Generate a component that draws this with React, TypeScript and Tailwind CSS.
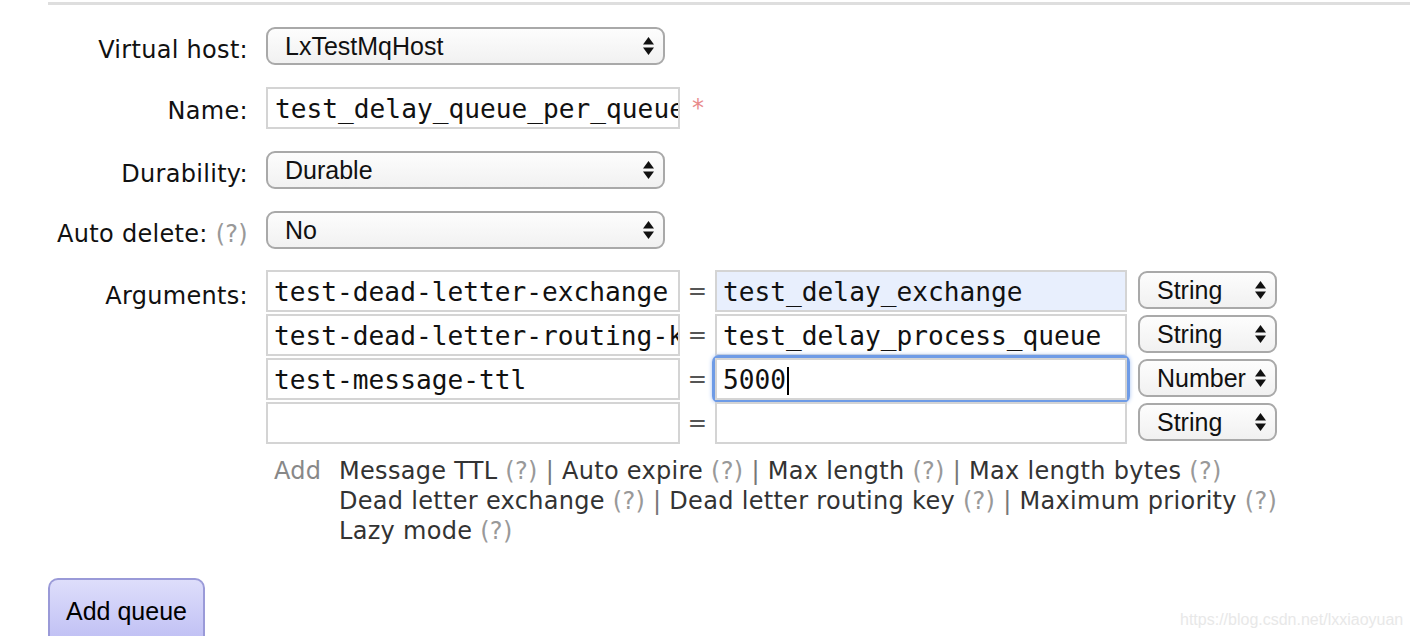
import React from 'react';

const labelFont = "font-['DejaVu_Sans',Verdana,sans-serif]";
const monoFont = "font-['DejaVu_Sans_Mono','Liberation_Mono',monospace]";
const uiFont = "font-['Liberation_Sans',Arial,sans-serif]";

function Arrows() {
  return (
    <svg width="11" height="18" viewBox="0 0 11 18" className="shrink-0">
      <path d="M5.5 0 L11 7.5 L0 7.5 Z" fill="#111" />
      <path d="M0 10.5 L11 10.5 L5.5 18 Z" fill="#111" />
    </svg>
  );
}

function FakeSelect({ value, width, pl = 'pl-[17px]' }: { value: string; width: string; pl?: string }) {
  return (
    <div
      className={`${width} ${pl} ${uiFont} flex h-[38px] items-center justify-between rounded-[9px] border-2 border-[#a9a9a9] bg-gradient-to-b from-[#fdfdfd] to-[#f1f1f1] pr-[9px] text-[25px] leading-none text-[#111]`}
    >
      <span>{value}</span>
      <Arrows />
    </div>
  );
}

function TextBox({ value, className = '', cursor = false }: { value: string; className?: string; cursor?: boolean }) {
  return (
    <div
      className={`${monoFont} flex h-[42px] w-full items-center overflow-hidden whitespace-nowrap border-2 border-[#d4d4d4] pl-[6px] pt-[3px] text-[26.2px] leading-none text-[#111] ${className}`}
    >
      <span>{value}</span>
      {cursor && <span className="ml-[1px] h-[28px] w-[2px] bg-black" />}
    </div>
  );
}

function Label({ children, pt }: { children: React.ReactNode; pt: string }) {
  return (
    <div className={`w-[248px] shrink-0 whitespace-nowrap text-right text-[24px] leading-[26px] tracking-[0.3px] text-[#111] ${labelFont} ${pt}`}>
      {children}
    </div>
  );
}

const Help = () => <span className="text-[#999]">(?)</span>;
const Sep = () => <span className="text-[#777]"> | </span>;

const args = [
  { key: 'test-dead-letter-exchange', value: 'test_delay_exchange', type: 'String', valueCls: 'bg-[#e8effd]' },
  { key: 'test-dead-letter-routing-key', value: 'test_delay_process_queue', type: 'String', valueCls: 'bg-white' },
  { key: 'test-message-ttl', value: '5000', type: 'Number', valueCls: 'focus' },
  { key: '', value: '', type: 'String', valueCls: 'bg-white' },
];

export default function App() {
  return (
    <div className="relative h-[636px] w-[1410px] overflow-hidden bg-white">
      <div className="ml-[48px] mt-[2px] h-[3px] bg-[#dedede]" />

      {/* Virtual host */}
      <div className="mt-[22px] flex">
        <Label pt="pt-[10px]">Virtual host:</Label>
        <div className="ml-[18px]">
          <FakeSelect value="LxTestMqHost" width="w-[399px]" />
        </div>
      </div>

      {/* Name */}
      <div className="mt-[22px] flex">
        <Label pt="pt-[11px]">Name:</Label>
        <div className="ml-[18px] flex items-center">
          <div className="w-[414px]">
            <TextBox value="test_delay_queue_per_queue" className="pl-[7px]" />
          </div>
          <span className={`ml-[12px] text-[24px] text-[#e88a8a] ${labelFont}`}>*</span>
        </div>
      </div>

      {/* Durability */}
      <div className="mt-[22px] flex">
        <Label pt="pt-[10px]">Durability:</Label>
        <div className="ml-[18px]">
          <FakeSelect value="Durable" width="w-[399px]" />
        </div>
      </div>

      {/* Auto delete */}
      <div className="mt-[22px] flex">
        <Label pt="pt-[10px]">
          Auto delete: <Help />
        </Label>
        <div className="ml-[18px]">
          <FakeSelect value="No" width="w-[399px]" />
        </div>
      </div>

      {/* Arguments */}
      <div className="mt-[21px] flex">
        <Label pt="pt-[13px]">Arguments:</Label>
        <div className="ml-[18px] flex flex-col gap-[2px]">
          {args.map((a, i) => (
            <div key={i} className="flex items-start">
              <div className="w-[414px]">
                <TextBox value={a.key} />
              </div>
              <div className={`flex h-[42px] w-[35px] items-center justify-center text-[23px] text-[#555] ${labelFont}`}>=</div>
              <div className="w-[412px]">
                {a.valueCls === 'focus' ? (
                  <div className="rounded-[4px] shadow-[0_0_0_3px_#6e9be6,0_0_4px_3px_#a9c4f2]">
                    <TextBox value={a.value} cursor className="border-[#3f79d8] bg-white" />
                  </div>
                ) : (
                  <TextBox value={a.value} className={a.valueCls} />
                )}
              </div>
              <div className="ml-[11px] mt-[1px]">
                <FakeSelect value={a.type} width="w-[139px]" pl="pl-[17px]" />
              </div>
            </div>
          ))}
        </div>
      </div>

      {/* Add helpers */}
      <div className={`ml-[274px] mt-[12px] flex text-[24px] leading-[30px] tracking-[0.3px] ${labelFont}`}>
        <span className="w-[65px] shrink-0 text-[#888]">Add</span>
        <div className="text-[#333]">
          <div>
            Message TTL <Help />
            <Sep />
            Auto expire <Help />
            <Sep />
            Max length <Help />
            <Sep />
            Max length bytes <Help />
          </div>
          <div>
            Dead letter exchange <Help />
            <Sep />
            Dead letter routing key <Help />
            <Sep />
            Maximum priority <Help />
          </div>
          <div>
            Lazy mode <Help />
          </div>
        </div>
      </div>

      {/* Submit */}
      <div className="ml-[48px] mt-[32px]">
        <button
          className={`${uiFont} h-[70px] w-[157px] rounded-t-[10px] border-2 border-b-0 border-[#9a9ad8] bg-gradient-to-b from-[#dedefb] to-[#bcbcf3] pb-[4px] text-[25px] text-black`}
        >
          Add queue
        </button>
      </div>

      {/* watermark */}
      <div className="absolute left-[1180px] top-[608px] font-['Liberation_Sans',Arial,sans-serif] text-[16px] text-[#e8e8e8]">
        https://blog.csdn.net/lxxiaoyuan
      </div>
    </div>
  );
}
